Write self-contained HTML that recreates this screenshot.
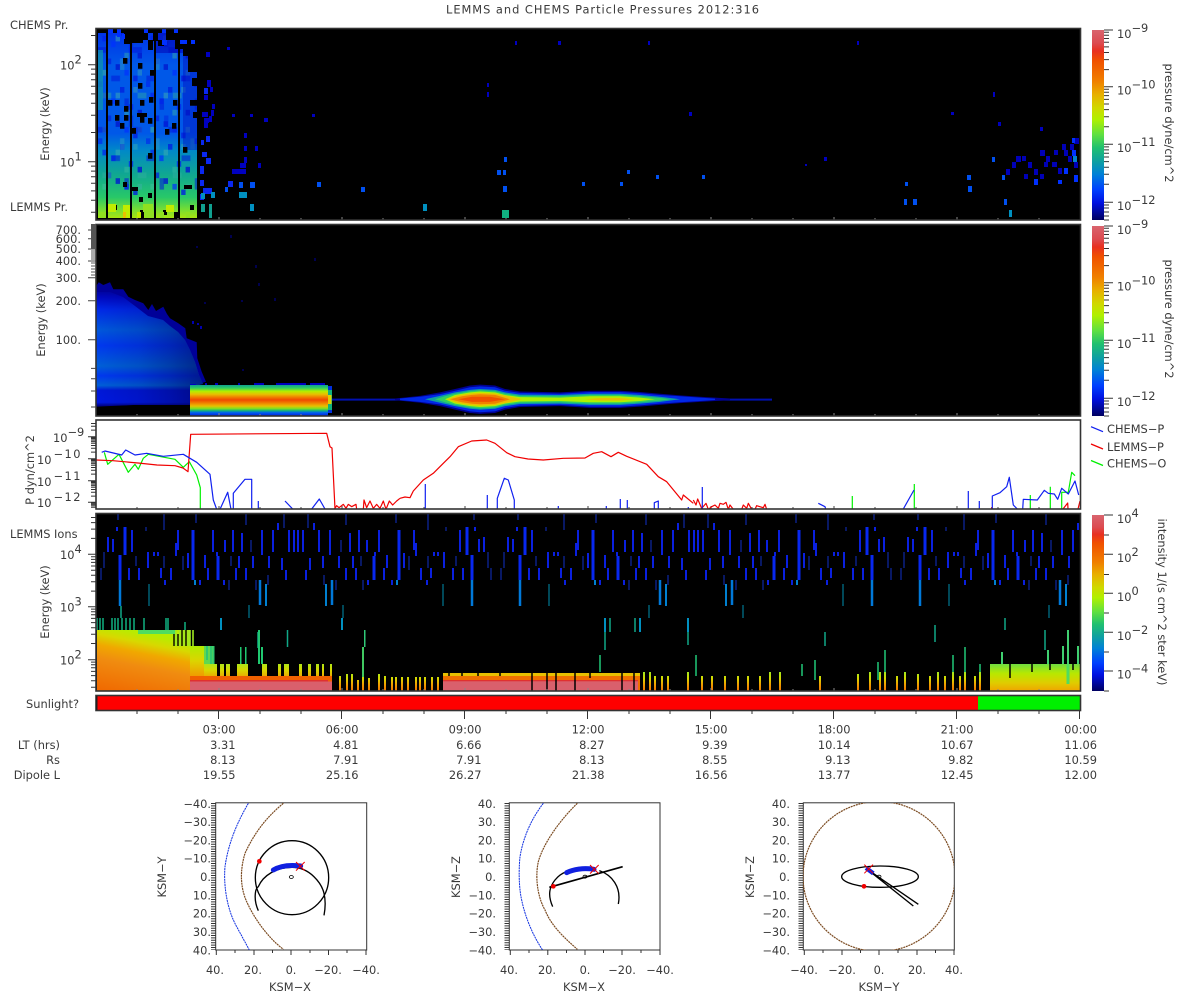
<!DOCTYPE html>
<html lang="en"><head><meta charset="utf-8"><title>LEMMS and CHEMS Particle Pressures 2012:316</title>
<style>
html,body{margin:0;padding:0;background:#fff}
svg{display:block}
text{font-family:"DejaVu Sans","Liberation Sans",sans-serif;font-size:11.4px;fill:#3a3a3a}
.e{text-anchor:end}.m{text-anchor:middle}
</style></head><body>
<svg width="1200" height="1000" viewBox="0 0 1200 1000" xmlns="http://www.w3.org/2000/svg">
<defs>
<linearGradient id="cb" x1="0" y1="0" x2="0" y2="1">
<stop offset="0" stop-color="#d9646e"/><stop offset=".07" stop-color="#dc4a50"/><stop offset=".11" stop-color="#e83020"/><stop offset=".16" stop-color="#f05000"/><stop offset=".27" stop-color="#f08000"/><stop offset=".34" stop-color="#e8b000"/><stop offset=".41" stop-color="#d0d800"/><stop offset=".47" stop-color="#b0f000"/><stop offset=".55" stop-color="#60e040"/><stop offset=".62" stop-color="#20c070"/><stop offset=".69" stop-color="#0fa0a0"/><stop offset=".76" stop-color="#0080d8"/><stop offset=".84" stop-color="#0040ff"/><stop offset=".91" stop-color="#0010e0"/><stop offset="1" stop-color="#000060"/>
</linearGradient>
<linearGradient id="p1g" gradientUnits="userSpaceOnUse" x1="0" y1="30" x2="0" y2="218">
<stop offset="0" stop-color="#0030e8"/><stop offset=".19" stop-color="#0058e8"/><stop offset=".55" stop-color="#0058e8"/><stop offset=".64" stop-color="#0088c8"/><stop offset=".77" stop-color="#10a890"/><stop offset=".89" stop-color="#28c868"/><stop offset=".95" stop-color="#70dc38"/><stop offset="1" stop-color="#a8e410"/>
</linearGradient>
<pattern id="p1n" patternUnits="userSpaceOnUse" x="98" y="30" width="48" height="57">
<rect x="4.4" y="5.7" width="4.4" height="5.7" fill="#0020f0" opacity=".7"/><rect x="13.2" y="11.4" width="4.4" height="5.7" fill="#0030ff" opacity=".7"/><rect x="22" y="0" width="4.4" height="5.7" fill="#0020e0" opacity=".8"/><rect x="30.8" y="17.1" width="4.4" height="5.7" fill="#0020f0" opacity=".7"/><rect x="39.6" y="22.8" width="4.4" height="5.7" fill="#0018d0" opacity=".8"/><rect x="8.8" y="28.5" width="4.4" height="5.7" fill="#0020e0" opacity=".7"/><rect x="17.6" y="34.2" width="4.4" height="5.7" fill="#0018d0" opacity=".8"/><rect x="26.4" y="39.9" width="4.4" height="5.7" fill="#0030ff" opacity=".7"/><rect x="35.2" y="45.6" width="4.4" height="5.7" fill="#0020e0" opacity=".8"/><rect x="0" y="51.3" width="4.4" height="5.7" fill="#0020f0" opacity=".6"/><rect x="17.6" y="5.7" width="4.4" height="5.7" fill="#40b0b0" opacity=".5"/><rect x="35.2" y="0" width="4.4" height="5.7" fill="#40b0b0" opacity=".4"/><rect x="4.4" y="39.9" width="4.4" height="5.7" fill="#40c0a0" opacity=".5"/><rect x="26.4" y="22.8" width="4.4" height="5.7" fill="#40c0a0" opacity=".4"/><rect x="39.6" y="39.9" width="4.4" height="5.7" fill="#40b0b0" opacity=".4"/>
</pattern>
<pattern id="p1m" patternUnits="userSpaceOnUse" x="98" y="30" width="35.2" height="79.8">
<rect x="0" y="17.1" width="8.8" height="5.7" fill="#0018d8" opacity=".55"/><rect x="13.2" y="45.6" width="8.8" height="5.7" fill="#0018d8" opacity=".55"/><rect x="26.4" y="68.4" width="4.4" height="11.4" fill="#0018d8" opacity=".55"/><rect x="22" y="28.5" width="4.4" height="11.4" fill="#30a0c0" opacity=".45"/><rect x="4.4" y="62.7" width="8.8" height="5.7" fill="#30b0a0" opacity=".45"/><rect x="30.8" y="5.7" width="4.4" height="11.4" fill="#0020e0" opacity=".5"/>
</pattern>
<linearGradient id="p2g" gradientUnits="userSpaceOnUse" x1="0" y1="285" x2="0" y2="406">
<stop offset="0" stop-color="#000080"/><stop offset=".1" stop-color="#0008c0"/><stop offset=".2" stop-color="#0028e8"/><stop offset=".37" stop-color="#0058dc"/><stop offset=".5" stop-color="#0038f0"/><stop offset=".67" stop-color="#0060d8"/><stop offset=".75" stop-color="#0038f0"/><stop offset=".83" stop-color="#0060d8"/><stop offset=".87" stop-color="#0018d8"/><stop offset=".97" stop-color="#0018e0"/><stop offset="1" stop-color="#000080"/>
</linearGradient>
<linearGradient id="p2f" x1="0" y1="0" x2="1" y2="0">
<stop offset="0" stop-color="#000050" stop-opacity="0"/><stop offset=".4" stop-color="#000050" stop-opacity=".15"/><stop offset=".7" stop-color="#000050" stop-opacity=".35"/><stop offset="1" stop-color="#000050" stop-opacity=".6"/>
</linearGradient>
<linearGradient id="band" gradientUnits="userSpaceOnUse" x1="0" y1="385" x2="0" y2="416">
<stop offset="0" stop-color="#10a090"/><stop offset=".1" stop-color="#30d060"/><stop offset=".2" stop-color="#b0f000"/><stop offset=".3" stop-color="#e8c000"/><stop offset=".39" stop-color="#f08000"/><stop offset=".48" stop-color="#f04800"/><stop offset=".58" stop-color="#f08000"/><stop offset=".68" stop-color="#e8c000"/><stop offset=".76" stop-color="#80e020"/><stop offset=".83" stop-color="#10b080"/><stop offset=".89" stop-color="#0060f0"/><stop offset="1" stop-color="#0020e0"/>
</linearGradient>
<linearGradient id="hotA" x1=".3" y1="0" x2="0" y2="1">
<stop offset="0" stop-color="#b8ec00"/><stop offset=".14" stop-color="#d8d800"/><stop offset=".3" stop-color="#f0a800"/><stop offset=".5" stop-color="#f08c10"/><stop offset="1" stop-color="#f06800"/>
</linearGradient>
<linearGradient id="hotS" gradientUnits="userSpaceOnUse" x1="0" y1="662" x2="0" y2="678">
<stop offset="0" stop-color="#a0e820"/><stop offset=".5" stop-color="#d8d800"/><stop offset="1" stop-color="#f0a000"/>
</linearGradient>
<linearGradient id="hotD" gradientUnits="userSpaceOnUse" x1="0" y1="672" x2="0" y2="691">
<stop offset="0" stop-color="#a0e820"/><stop offset=".35" stop-color="#d8d800"/><stop offset=".65" stop-color="#f0a000"/><stop offset="1" stop-color="#f07000"/>
</linearGradient>
<linearGradient id="hotB" gradientUnits="userSpaceOnUse" x1="0" y1="664" x2="0" y2="691">
<stop offset="0" stop-color="#70dc40"/><stop offset=".35" stop-color="#b8e800"/><stop offset=".7" stop-color="#e0cc00"/><stop offset="1" stop-color="#f0a400"/>
</linearGradient>
<linearGradient id="hotC" gradientUnits="userSpaceOnUse" x1="0" y1="646" x2="0" y2="676">
<stop offset="0" stop-color="#b0ec00"/><stop offset=".5" stop-color="#dcd400"/><stop offset="1" stop-color="#f09c00"/>
</linearGradient>
<clipPath id="c1"><rect x="96" y="28" width="985" height="192"/></clipPath>
<clipPath id="c2"><rect x="96" y="224" width="985" height="192"/></clipPath>
<clipPath id="c3"><rect x="96" y="420" width="985" height="89"/></clipPath>
<clipPath id="c4"><rect x="96" y="513" width="985" height="178"/></clipPath>
<clipPath id="c5"><rect x="803" y="803" width="151" height="147"/></clipPath>
<g id="mt"><path d="M1104 2.6h5M1104 5.6h5M1104 8.9h5M1104 12.7h5M1104 17.3h5M1104 22.9h5M1104 30h5M1104 40h5" stroke="#333" fill="none"/></g>
<g id="st">
<path fill="none" stroke="#0a20e0" stroke-width="2" d="M12 537V552M17 539V552M21 527V531M36 530V552M43 568V580M52 552V568M58 552V556M62 552V556M80 543V556M82 530V550M92 553V568M109 555V568M117 530V552M121 552V556M129 540V552M137 530V552M140 568V580M143 556V568M146 533V552M166 530V555M177 530V552M182 523V530M193 530V552M198 530V552M157 556V568M186 558V570M75 568V580M104 580V585M128 580V585M69 580V585M33 568V580M65 568V578M112 568V580M150 568V580M173 556V568M190 570V580"/>
<path fill="none" stroke="#0828f0" stroke-width="3" d="M29 527V555M97 530V580M24 555V580M122 556V580"/>
<path fill="none" stroke="#1030c8" d="M8 552V568M68 513V530M5 568V580M22 513V520M68 556V568M150 513V525M188 513V528M155 540V552M100 513V523M50 527V531M133 580V590M172 575V585M40 556V566M87 556V570M135 556V566M160 580V590"/>
<path fill="none" stroke="#0078d8" stroke-width="2.5" d="M24 580V606M164 580V605"/>
<path fill="none" stroke="#0080d0" stroke-width="2" d="M170 584V606M99 580V585"/>
<path fill="none" stroke="#0090b0" d="M53 584V606M153 605V618"/>
</g>
</defs>
<rect width="1200" height="1000" fill="#fff"/>
<text x="446" y="13.5" textLength="313">LEMMS and CHEMS Particle Pressures  2012:316</text>

<!-- PANEL 1 -->
<rect x="96" y="28" width="985" height="192" fill="#000"/>
<g clip-path="url(#c1)">
<rect x="98" y="30" width="99" height="188" fill="url(#p1g)"/>
<rect x="98" y="30" width="99" height="165" fill="url(#p1n)"/>
<rect x="98" y="30" width="99" height="160" fill="url(#p1m)"/>
<rect x="98" y="50" width="5" height="60" fill="#0f98a8" opacity=".7"/>
<rect x="183" y="45" width="14" height="105" fill="#0010c0" opacity=".45"/>
<rect x="155" y="33" width="42" height="20" fill="#0000b0" opacity=".5"/>
<path fill="#000" d="M98 28h99v5h-99zM124 33h8v11h-8zM131 33h12v10h-12zM143 33h5v7h-5zM153 33h5v8h-5zM166 33h31v7h-31zM175 40h22v9h-22zM183 49h14v7h-14zM188 56h9v16h-9zM148 40h5v10h-5zM158 40h6v6h-6z"/>
<path fill="#000" d="M123 58h4.4v5.7h-4.4zM138 63h4.4v5.7h-4.4zM150 70h4.4v5.7h-4.4zM108 100h4.4v5.7h-4.4zM115 100h4.4v5.7h-4.4zM124 106h4.4v5.7h-4.4zM140 100h4.4v5.7h-4.4zM149 97h4.4v5.7h-4.4zM173 100h4.4v5.7h-4.4zM190 100h7v5.7h-7zM138 83h4.4v5.7h-4.4zM115 115h4.4v5.7h-4.4zM124 115h4.4v5.7h-4.4zM137 113h10v4h-10zM140 117h4.4v5.7h-4.4zM148 118h4.4v5.7h-4.4zM130 128h6v5.7h-6zM120 123h4.4v5.7h-4.4zM172 123h4.4v5.7h-4.4zM165 129h4.4v5.7h-4.4zM148 153h4.4v5.7h-4.4zM183 147h4.4v5.7h-4.4zM192 78h5v8h-5zM193 112h4v6h-4z"/>
<path fill="#0030ff" d="M108 29h5v4h-5zM117 29h4v8h-4zM144 29h4v4h-4zM162 29h4v4h-4zM122 34h3v5h-3zM162 40h5v5h-5zM174 29h4v4h-4zM180 40h7v4h-7zM191 40h4v4h-4z"/>
<path fill="#000" d="M106 30h2v188h-2zM130 30h2v188h-2zM154 30h2v188h-2zM178 30h2v188h-2z"/>
<path fill="#000" d="M113 205h4v5h-4zM123 182h4v5h-4zM140 210h4v8h-4zM139 197h4v5h-4zM163 210h4v5h-4zM174 212h4v6h-4zM190 205h4v5h-4zM148 193h4v5h-4zM130 187h8v4h-8zM184 185h8v4h-8z"/>
<path fill="#c0ec00" d="M108 204h8v8h-8zM123 205h7v13h-7zM166 205h8v7h-8zM137 212h4v6h-4z"/>
<path fill="#90e020" d="M100 212h6v6h-6zM143 204h10v8h-10zM160 212h4v6h-4zM145 212h9v6h-9zM186 212h4v6h-4z"/>
<rect x="123" y="212" width="3" height="6" fill="#e8c000"/>
<path fill="#0a28f0" d="M200 166h4v8h-4zM200 180h4v6h-4zM201 140h3v5h-3zM202 152h5v5h-5zM200 194h4v6h-4zM204 88h4v6h-4zM206 136h4v6h-4zM206 158h5v6h-5zM228 181h5v6h-5zM203 188h9v6h-9z"/>
<path fill="#0000c0" d="M207 80h4v7h-4zM210 87h3v5h-3zM204 95h4v5h-4zM212 104h3v5h-3zM211 110h3v6h-3zM202 112h6v5h-6zM204 118h5v5h-5zM209 116h3v6h-3zM204 123h4v5h-4zM227 47h3v3h-3zM206 52h4v5h-4zM244 133h3v5h-3zM244 146h3v5h-3zM244 157h3v6h-3zM240 163h6v5h-6zM232 169h14v5h-14zM258 163h3v5h-3zM232 114h3v3h-3zM250 114h3v3h-3zM264 118h4v4h-4zM312 114h3v3h-3zM255 146h3v5h-3zM515 41h2v4h-2zM558 41h3v4h-3zM648 41h2v4h-2zM857 41h2v4h-2zM487 83h2v4h-2zM487 92h2v5h-2zM993 92h2v5h-2zM689 112h3v4h-3zM998 122h3v4h-3zM951 112h3v3h-3zM1040 127h3v4h-3zM824 157h3v4h-3zM805 164h2v2h-2z"/>
<path fill="#0050f0" d="M250 182h5v6h-5zM239 182h4v6h-4zM225 187h3v5h-3zM317 182h4v5h-4zM361 187h4v5h-4zM503 186h4v6h-4zM504 157h3v5h-3zM497 170h4v5h-4zM503 170h3v5h-3zM582 182h3v4h-3zM627 170h3v4h-3zM620 182h3v4h-3zM656 175h3v4h-3zM702 175h3v4h-3zM905 182h3v4h-3zM904 199h3v6h-3zM913 199h4v6h-4zM1004 199h3v6h-3zM968 186h4v6h-4zM967 175h4v5h-4zM1002 175h3v5h-3zM992 157h3v5h-3z"/>
<path fill="#0090c0" d="M239 192h8v6h-8zM201 193h4v6h-4zM211 192h4v6h-4zM250 204h4v7h-4zM423 204h4v7h-4zM1009 210h3v7h-3z"/>
<path fill="#10a090" d="M209 204h3v14h-3zM201 204h4v8h-4z"/>
<rect x="502" y="210" width="7" height="8" fill="#10b080"/>
<path fill="#0000b8" d="M1016 156h5v6h-5zM1022 156h4v5h-4zM1028 162h4v6h-4zM1034 169h4v6h-4zM1040 150h5v6h-5zM1046 156h4v6h-4zM1052 162h5v5h-5zM1058 168h4v6h-4zM1064 150h4v6h-4zM1070 144h4v6h-4zM1074 138h5v6h-5zM1062 144h4v6h-4zM1068 156h4v6h-4zM1074 162h4v6h-4zM1006 169h4v6h-4zM1012 162h4v6h-4zM1024 174h4v5h-4zM1040 174h4v5h-4zM1054 150h4v5h-4zM1044 162h4v5h-4z"/>
<path fill="#0030ff" d="M1072 150h4v6h-4zM1074 175h4v7h-4zM1064 168h4v6h-4zM1034 179h4v6h-4zM1058 180h4v4h-4zM1072 138h3v5h-3z"/>
<rect x="1073" y="156" width="4" height="6" fill="#0080d0"/>
<path stroke="#888" d="M137 220v-2M178 220v-2M219 220v-3M260 220v-2M301 220v-2M342 220v-3M383 220v-2M424 220v-2M465 220v-3M506 220v-2M547 220v-2M588 220v-3M629 220v-2M670 220v-2M711 220v-3M752 220v-2M793 220v-2M834 220v-3M875 220v-2M916 220v-2M957 220v-3M998 220v-2M1039 220v-2"/>
</g>
<rect x="96" y="28.5" width="984.5" height="191.5" fill="none" stroke="#333" stroke-width="1.6"/>
<path stroke="#333" fill="none" d="M88 161.7h8M88 64.7h8M91 212.3h5M91 200.3h5M91 190.9h5M91 183.2h5M91 176.7h5M91 171.1h5M91 166.1h5M91 132.5h5M91 115.3h5M91 103.3h5M91 93.9h5M91 86.2h5M91 79.7h5M91 74.1h5M91 69.1h5M91 35.5h5"/>
<text x="10" y="29">CHEMS Pr.</text><text x="10" y="211">LEMMS Pr.</text>
<text x="60" y="69.5">10<tspan dy="-6">2</tspan></text><text x="60" y="166.5">10<tspan dy="-6">1</tspan></text>
<text class="m" transform="translate(49 124) rotate(-90)">Energy (keV)</text>
<!-- colorbar 1 -->
<rect x="1092" y="30" width="12" height="190" fill="url(#cb)"/>
<path d="M1104 30h9M1104 86.7h9M1104 144.3h9M1104 202.3h9" stroke="#333"/>
<use href="#mt" y="29.6"/><use href="#mt" y="86.7"/><use href="#mt" y="144.3"/><path d="M1104 205h5M1104 208h5M1104 212h5M1104 216h5M1104 220h5" stroke="#333"/>
<text x="1117" y="38">10<tspan dy="-6">−9</tspan></text><text x="1117" y="94.5">10<tspan dy="-6">−10</tspan></text><text x="1117" y="152">10<tspan dy="-6">−11</tspan></text><text x="1117" y="210">10<tspan dy="-6">−12</tspan></text>
<text class="m" transform="translate(1165 123) rotate(90)">pressure dyne/cm^2</text>

<!-- PANEL 2 -->
<rect x="96" y="224" width="985" height="192" fill="#000"/>
<g clip-path="url(#c2)">
<polygon fill="#000098" points="95.7,286.7 98.7,282.3 103.3,285 110,282.3 113.3,289.3 123.3,289.3 128.3,296.7 135,300 143.3,303.3 148.3,310 152,304 156,311 163.3,306.7 167,314 170,318.3 178.3,323.3 185.3,328.3 186.7,338.3 196.7,342.3 197.3,358.3 201.7,371.7 206,381.7 190,386.7 190,405 133.3,405 95.7,406.7"/>
<polygon fill="url(#p2g)" points="96,292 110,292 123,297 135,306 148,316 163,320 170,326 178,332 185,340 190,350 195,362 199,375 203,384 190,387 190,405 133,405 96,406"/>
<polygon fill="url(#p2f)" points="96,292 110,292 123,297 135,306 148,316 163,320 170,326 178,332 185,340 190,350 195,362 199,375 203,384 190,387 190,405 133,405 96,406"/>
<path fill="#0000b0" d="M192 321h2v3h-2zM197 323h2v2h-2zM200 326h2v3h-2z"/>
<path stroke="#0000a0" fill="none" d="M231 235v3M197 246v2M256 265v3M259 283v3M242 300v2M275 298v3M315 258v3M205 302v2M243 369v2"/>
<rect x="190" y="385" width="138" height="31" fill="url(#band)"/>
<path fill="#0000c0" d="M205 383h2v2h-2zM215 383h3v2h-3zM238 383h2v2h-2zM254 383h10v2h-10zM276 383h30v2h-30zM310 383h15v2h-15zM190 384h6v1h-6z"/>
<path fill="#0030e0" d="M328 386h4v27h-4z"/>
<path fill="#10b080" d="M328 390h4v20h-4z"/><path fill="#e0d000" d="M328 395h3.5v9h-3.5z"/>
<rect x="332" y="398.6" width="440" height="2" fill="#0010b0"/>
<g transform="translate(0 399.3) scale(1 .86)">
<polygon fill="#000090" points="395,-1 420,-4 440,-8 455,-12 470,-16 480,-17 495,-16 505,-12 520,-9 560,-8 590,-10 620,-10 640,-8.5 660,-6.5 680,-4.5 700,-3 730,-1 730,1 700,3 680,4.5 660,6.5 640,8.5 620,10 590,10 560,8 520,9 505,12 495,16 480,17 470,16 455,12 440,8 420,4 395,1"/>
<polygon fill="#0028e8" points="400,-1 420,-3 440,-6 455,-10 470,-14 480,-15 495,-14 505,-10 520,-7.5 560,-6.5 590,-8.5 620,-8.5 640,-7 660,-5 680,-3.5 700,-2 715,-.8 715,.8 700,2 680,3.5 660,5 640,7 620,8.5 590,8.5 560,6.5 520,7.5 505,10 495,14 480,15 470,14 455,10 440,6 420,3 400,1"/>
<polygon fill="#10a0a0" points="425,0 440,-4 455,-8 470,-11 480,-12 495,-11 505,-8 520,-5.5 560,-5 590,-6.5 620,-6.5 640,-5 660,-3 680,0 660,3 640,5 620,6.5 590,6.5 560,5 520,5.5 505,8 495,11 480,12 470,11 455,8 440,4"/>
<polygon fill="#30d060" points="435,0 445,-3.5 455,-6.5 470,-9.5 480,-10.5 495,-9.5 505,-6.5 520,-4 560,-3.5 590,-5 620,-5 640,-3.5 660,-1.5 670,0 660,1.5 640,3.5 620,5 590,5 560,3.5 520,4 505,6.5 495,9.5 480,10.5 470,9.5 455,6.5 445,3.5"/>
<polygon fill="#b0f000" points="445,0 455,-5 470,-8 480,-9 495,-8 505,-5 520,-2.5 560,-2 590,-3.5 620,-3.5 640,-2 655,0 640,2 620,3.5 590,3.5 560,2 520,2.5 505,5 495,8 480,9 470,8 455,5"/>
<polygon fill="#e8c000" points="447,0 458,-4.5 470,-6.8 480,-7.5 495,-6.8 507,-4 522,0 507,4 495,6.8 480,7.5 470,6.8 458,4.5"/>
<polygon fill="#e8c000" points="585,0 600,-1.5 620,-1.5 635,0 620,1.5 600,1.5"/>
<polygon fill="#f08000" points="450,0 462,-3.5 472,-5.2 480,-5.8 495,-5.2 510,0 495,5.2 480,5.8 472,5.2 462,3.5"/>
<polygon fill="#f05000" points="458,0 472,-3 490,-3 505,0 490,3 472,3"/>
</g>
<path stroke="#888" d="M137 416v-2M178 416v-2M219 416v-3M260 416v-2M301 416v-2M342 416v-3M383 416v-2M424 416v-2M465 416v-3M506 416v-2M547 416v-2M588 416v-3M629 416v-2M670 416v-2M711 416v-3M752 416v-2M793 416v-2M834 416v-3M875 416v-2M916 416v-2M957 416v-3M998 416v-2M1039 416v-2"/>
</g>
<rect x="96" y="224.5" width="984.5" height="191.5" fill="none" stroke="#333" stroke-width="1.6"/>
<path stroke="#444" fill="none" d="M88 339.7h8M88 300.7h8M88 277.7h8M88 261h8M88 249h8M88 238.7h8M88 230h8M91 368.4h5M91 378.7h5M91 391h5M91 407h5"/>
<rect x="91" y="224" width="5" height="25" fill="#555"/>
<path stroke="#555" d="M91 251h5M91 253h5M91 255h5M91 257h5M91 259h5M91 263h5M91 266h5M91 269h5M91 272h5M91 275h5"/>
<text class="e" x="81" y="234">700.</text><text class="e" x="81" y="243">600.</text><text class="e" x="81" y="253">500.</text><text class="e" x="81" y="265">400.</text><text class="e" x="81" y="282">300.</text><text class="e" x="81" y="305">200.</text><text class="e" x="81" y="344">100.</text>
<text class="m" transform="translate(45 320) rotate(-90)">Energy (keV)</text>
<!-- colorbar 2 -->
<rect x="1092" y="226" width="12" height="190" fill="url(#cb)"/>
<path d="M1104 226h9M1104 282.7h9M1104 340.3h9M1104 398.3h9" stroke="#333"/>
<use href="#mt" y="225.6"/><use href="#mt" y="282.7"/><use href="#mt" y="340.3"/><path d="M1104 401h5M1104 404h5M1104 408h5M1104 412h5M1104 416h5" stroke="#333"/>
<text x="1117" y="234">10<tspan dy="-6">−9</tspan></text><text x="1117" y="290.5">10<tspan dy="-6">−10</tspan></text><text x="1117" y="348">10<tspan dy="-6">−11</tspan></text><text x="1117" y="406">10<tspan dy="-6">−12</tspan></text>
<text class="m" transform="translate(1165 319) rotate(90)">pressure dyne/cm^2</text>

<!-- PANEL 3 -->
<g clip-path="url(#c3)">
<path stroke="#444" d="M137 509v-2M178 509v-2M219 509v-3M260 509v-2M301 509v-2M342 509v-3M383 509v-2M424 509v-2M465 509v-3M506 509v-2M547 509v-2M588 509v-3M629 509v-2M670 509v-2M711 509v-3M752 509v-2M793 509v-2M834 509v-3M875 509v-2M916 509v-2M957 509v-3M998 509v-2M1039 509v-2"/>
<g fill="none" stroke-width="1.2" stroke-linejoin="round">
<path stroke="#00f000" d="M104.3 452.3L107.7 464.3 119 454.3 128.3 472.3 135 464.3 138.3 469.3 143.3 458.3 148.3 454.3 175 459.3 183.3 467.3 189.3 461.7 196.7 475 200.3 487.7 200.3 509"/>
<path stroke="#00f000" d="M852.3 509V496M914.3 509V484M1030.3 509V495M1050.3 509V486.7M1061.7 509V492.3L1068.3 492.3 1071.7 472.3 1075 475.7"/>
<path stroke="#f00000" d="M96 460L113 460.7 138 463 157 465 175 465.7 183 468 188 471.7 190.7 434.3 326.7 433.3 330 446.7 332 448 335 509"/>
<g transform="translate(0 415) scale(.33333)" stroke-width="3.6">
<path stroke="#f00000" d="M1003 283L1010 272 1017 278 1030 268 1038 280 1045 268 1055 275 1068 268 1070 283 1090 283 1092 255 1100 278 1110 258 1120 280 1130 268 1140 280 1150 258 1158 283 1168 258 1178 270 1190 258 1200 250"/>
</g>
<path stroke="#f00000" d="M400 498.3L405 497 410 497.7 413.3 491 423.3 480 433.3 473.3 443.3 463.3 450 456.7 458.3 446.7 471.7 441 486.7 440 495 443.3 506.7 452.7 515 456.7 528 459 543.3 460 563.3 458.3 585 458 593.3 453.3 601.7 451.7 611 456.7 618.3 452.3 626.7 456.3 646.7 464.3 658.3 476.7 666.7 481.7 681.7 500 683.3 495 693.3 503.3"/>
<g transform="translate(400 415) scale(.33333)" stroke-width="3.6">
<path stroke="#f00000" d="M880 255L888 270 893 252 905 280 918 265 925 283 935 275 945 270 955 280 960 265 970 268 978 262 985 283 990 270 1000 283 1025 283 1030 270 1040 280 1045 265 1055 283 1065 283 1070 272 1090 278 1095 268 1100 283"/>
</g>
<path stroke="#f00000" d="M991.7 509V507M1063 509L1067.7 503 1068 509M1078 509L1080 501"/>
<path stroke="#1020f0" d="M101.7 452.3L105 451 121.7 455 125.7 450 135 455 146.7 453.3 163.3 456.3 183.3 454.3 196.7 462.3 210 474.3 213.3 500 216.7 509.3M220 509.3L227.7 492.3 231 509.3M233.3 509.3V493.3L245 479.3 251.7 479.3V509.3M258.3 501V509M285 501L292.7 509M311.7 509L319.3 499 325 509M425.3 484V509M487.3 495V509M497.3 509V498.3L504.3 478.3 508.3 480 514.3 500V509M558.3 506V509M606.3 506V509M620.3 499V509M627.3 500V509M654.3 509V502.7L658.3 501V509M688.3 507V509M702.3 487V509M818.3 503.3L825 506.7 825.7 509M903.3 509L914 490M968.3 491V509M979.3 501V509M992.3 509V496L1000 492.7 1006.7 486.7 1009.3 477.3 1013.3 505 1017.3 509M1022.7 509L1023.3 499.3 1037.3 500 1044.3 490.3 1048.3 493.3 1054.3 494 1057.7 499.3 1061.7 488.3 1068.3 494 1075 481 1078.7 495"/>
</g></g>
<rect x="96" y="420" width="984.5" height="89" fill="none" stroke="#333" stroke-width="1.6"/>
<path stroke="#333" fill="none" d="M88 436.7h8M88 458.7h8M88 480.7h8M88 502.3h8M91 430.1h5M91 426.2h5M91 423.5h5M91 452.1h5M91 448.2h5M91 445.5h5M91 443.3h5M91 441.6h5M91 440.1h5M91 438.8h5M91 437.7h5M91 474.1h5M91 470.2h5M91 467.5h5M91 465.3h5M91 463.6h5M91 462.1h5M91 460.8h5M91 459.7h5M91 496.1h5M91 492.2h5M91 489.5h5M91 487.3h5M91 485.6h5M91 484.1h5M91 482.8h5M91 481.7h5M91 507.2h5M91 505.7h5M91 504.4h5M91 503.3h5"/>
<text x="53" y="442">10<tspan dy="-6">−9</tspan></text>
<text x="37" y="464">10<tspan dx="2" dy="-6" letter-spacing="1.5">−10</tspan></text><text x="37" y="486">10<tspan dx="2" dy="-6" letter-spacing="1.5">−11</tspan></text><text x="37" y="507">10<tspan dx="2" dy="-6" letter-spacing="1.5">−12</tspan></text>
<text class="m" transform="translate(34 470) rotate(-90)">P dyn/cm^2</text>
<path d="M1091 426.7L1103 431.7" stroke="#1020f0" stroke-width="1.3"/><path d="M1091 444L1103 449" stroke="#f00000" stroke-width="1.3"/><path d="M1091 460.5L1103 465.5" stroke="#00f000" stroke-width="1.3"/>
<text x="1107" y="433">CHEMS−P</text><text x="1107" y="451">LEMMS−P</text><text x="1107" y="467.5">CHEMS−O</text>

<!-- PANEL 4 -->
<rect x="96" y="513" width="985" height="178" fill="#000"/>
<g clip-path="url(#c4)">
<use href="#st" x="96"/><use href="#st" transform="translate(496 0) scale(-1 1)"/><use href="#st" x="496"/><use href="#st" transform="translate(896 0) scale(-1 1)"/><use href="#st" x="896"/>
<path fill="none" stroke="#10b080" stroke-width="1.5" d="M97 618V630M100 618V630M103 618V630M112 618V630M115 618V630M118 618V630M122 618V630M126 618V630M130 618V630M134 618V630M144 618V630M166 618V630M168 618V630M185 622V630"/>
<path fill="none" stroke="#0090c0" stroke-width="2" d="M221 618V630M342 618V630M605 618V632M640 618V632M688 618V632"/>
<path fill="none" stroke="#10a888" stroke-width="1.5" d="M121 606V618M258 632V648M287.5 630V647M605 632V650M610 618V632M635 618V632M688 632V645M825 632V646M935 625V642M1045 630V650M1005 618V630"/>
<rect x="97" y="630" width="93" height="61" fill="url(#hotA)"/>
<rect x="138" y="630" width="37" height="4" fill="#50dc60"/>
<path stroke="#000" stroke-width="1.4" fill="none" d="M174 634V646M178 634V646M182 630V646M186 630V646M192 630V646"/>
<path stroke="#a0e820" stroke-width="1.6" fill="none" d="M176 630V646M180 630V646M184 630V646M188 630V646M190 630V646M193 630V646"/>
<rect x="190" y="646" width="14" height="30" fill="url(#hotC)"/>
<rect x="204" y="646" width="9" height="18" fill="#60d850"/>
<path stroke="#30c870" stroke-width="2" fill="none" d="M207 646V660M211 646V664M213.5 646V664"/>
<path fill="url(#hotS)" d="M204 664h13v12h-13zM220 664h4v12h-4zM226 664h4v12h-4zM237 664h11v12h-11zM262 664h5v12h-5zM278 664h3v12h-3zM284 664h5v12h-5zM299 664h3v12h-3zM308 664h3v12h-3zM316 664h3v12h-3zM322 664h2v12h-2zM330 664h2v12h-2z"/>
<path fill="#20c870" d="M258 630h2v34h-2zM261 647h2v17h-2zM240 647h1.5v17h-1.5zM245 647h1.5v17h-1.5z"/>
<rect x="190" y="676" width="142" height="15" fill="#f06000"/>
<rect x="190" y="680" width="138" height="1.5" fill="#e03030"/>
<rect x="190" y="681.5" width="142" height="9.5" fill="#d9606c"/>
<path stroke="url(#hotD)" stroke-width="2" fill="none" d="M347 674V691M352 674V691M358 680V691M379 674V691M392 677V691M396 677V691M408 677V691M416 677V691M425 677V691M432 677V691M438 677V691M363 676V691M340 676V691M369 678V691M385 676V691M402 677V691M420 677V691"/>
<rect x="362" y="647" width="2" height="30" fill="#40c860"/>
<rect x="364" y="630" width="1.5" height="17" fill="#30c878"/>
<rect x="443" y="676" width="197" height="15" fill="#f07000"/>
<rect x="443" y="673" width="197" height="3" fill="#e8c000"/>
<rect x="443" y="681" width="195" height="9.5" fill="#d9606c"/>
<rect x="443" y="680" width="195" height="1.3" fill="#e03030"/>
<path stroke="#000" stroke-width="1.5" fill="none" d="M449 673V676M462 673V676M478 673V676M500 673V676M532 673V691M547 673V691M556 673V691M575 673V691M622 673V691M634 673V691M590 673V678"/>
<path stroke="url(#hotD)" stroke-width="2" fill="none" d="M644 672V691M650 672V691M655 676V691M662 676V691M668 676V691M688 672V691M702 676V691M712 676V691M725 676V691M738 676V691M748 676V691M760 676V691M770 672V691M780 672V691M820 676V691M858 674V691M870 672V691M880 672V691M885 672V691M897 676V691M905 672V691M918 674V691M930 676V691M938 672V691M945 676V691M953 672V691M960 676V691M965 672V691M975 676V691M980 672V691"/>
<path stroke="#20c878" stroke-width="1.5" fill="none" d="M696 655V676M815 660V680M885 650V672M965 647V672M878 662V680M802 664V676M953 655V672M600 655V672M980 664V672"/>
<rect x="990" y="664" width="90" height="27" fill="url(#hotB)"/>
<path stroke="#000" stroke-width="1.5" fill="none" d="M1010 664V678M1032 664V672M1050 664V670M1073 664V670"/>
<path stroke="#40d070" stroke-width="2" fill="none" d="M1068 630V664M1063 646V664M1078 646V664M1048 650V664M1002 652V664"/>
<path fill="none" stroke="#50dc60" stroke-width="3" d="M1068 664V684"/>
<path stroke="#888" d="M137 691v-2M178 691v-2M219 691v-3M260 691v-2M301 691v-2M342 691v-3M383 691v-2M424 691v-2M465 691v-3M506 691v-2M547 691v-2M588 691v-3M629 691v-2M670 691v-2M711 691v-3M752 691v-2M793 691v-2M834 691v-3M875 691v-2M916 691v-2M957 691v-3M998 691v-2M1039 691v-2"/>
</g>
<rect x="96" y="513.5" width="984.5" height="177.5" fill="none" stroke="#333" stroke-width="1.6"/>
<path stroke="#333" fill="none" d="M88 554.3h8M88 606.7h8M88 659.7h8M91 687.2h5M91 680.7h5M91 675.6h5M91 671.4h5M91 667.8h5M91 664.8h5M91 662.1h5M91 643.5h5M91 634.2h5M91 627.7h5M91 622.6h5M91 618.4h5M91 614.8h5M91 611.8h5M91 609.1h5M91 591.1h5M91 581.8h5M91 575.3h5M91 570.2h5M91 566h5M91 562.4h5M91 559.4h5M91 556.7h5M91 538.4h5M91 529.1h5M91 522.6h5M91 517.5h5"/>
<text x="10" y="538">LEMMS Ions</text>
<text x="60" y="559">10<tspan dy="-6">4</tspan></text><text x="60" y="611.5">10<tspan dy="-6">3</tspan></text><text x="60" y="664.5">10<tspan dy="-6">2</tspan></text>
<text class="m" transform="translate(49 602) rotate(-90)">Energy (keV)</text>
<!-- colorbar 3 -->
<rect x="1092" y="515" width="12" height="176" fill="url(#cb)"/>
<path d="M1104 515h9M1104 554.3h9M1104 593.3h9M1104 632.3h9M1104 671h9M1104 535h5M1104 574.5h5M1104 613h5M1104 652h5M1104 691h5" stroke="#333"/>
<text x="1117" y="523">10<tspan dy="-6">4</tspan></text><text x="1117" y="562">10<tspan dy="-6">2</tspan></text><text x="1117" y="601">10<tspan dy="-6">0</tspan></text><text x="1117" y="640">10<tspan dy="-6">−2</tspan></text><text x="1117" y="678.5">10<tspan dy="-6">−4</tspan></text>
<text class="m" transform="translate(1158 602) rotate(90)">intensity 1/(s cm^2 ster keV)</text>

<!-- SUNLIGHT -->
<rect x="96" y="695" width="882" height="15" fill="#f00"/>
<rect x="978" y="695" width="102" height="15" fill="#00f000"/>
<rect x="96" y="695.5" width="984.5" height="15" fill="none" stroke="#333" stroke-width="1.6"/>
<rect x="96" y="696" width="1.5" height="14" fill="#222"/>
<text class="e" x="79" y="708">Sunlight?</text>
<path stroke="#333" fill="none" d="M137 710v4M178 710v4M218.5 710v9M260 710v4M301 710v4M341.5 710v9M383 710v4M424 710v4M464.5 710v9M506 710v4M547 710v4M587.5 710v9M629 710v4M670 710v4M710.5 710v9M752 710v4M793 710v4M833.5 710v9M875 710v4M916 710v4M956.5 710v9M998 710v4M1039 710v4M1079.5 710v9"/>
<g class="m">
<text class="e" x="235.5" y="733.5">03:00</text><text class="e" x="358.5" y="733.5">06:00</text><text class="e" x="481.5" y="733.5">09:00</text><text class="e" x="604.5" y="733.5">12:00</text><text class="e" x="727.5" y="733.5">15:00</text><text class="e" x="850.5" y="733.5">18:00</text><text class="e" x="973.5" y="733.5">21:00</text><text class="e" x="1097" y="733.5">00:00</text>
<text class="e" x="60" y="749">LT (hrs)</text><text class="e" x="235.5" y="749">3.31</text><text class="e" x="358.5" y="749">4.81</text><text class="e" x="481.5" y="749">6.66</text><text class="e" x="604.5" y="749">8.27</text><text class="e" x="727.5" y="749">9.39</text><text class="e" x="850.5" y="749">10.14</text><text class="e" x="973.5" y="749">10.67</text><text class="e" x="1097" y="749">11.06</text>
<text class="e" x="60" y="764">Rs</text><text class="e" x="235.5" y="764">8.13</text><text class="e" x="358.5" y="764">7.91</text><text class="e" x="481.5" y="764">7.91</text><text class="e" x="604.5" y="764">8.13</text><text class="e" x="727.5" y="764">8.55</text><text class="e" x="850.5" y="764">9.13</text><text class="e" x="973.5" y="764">9.82</text><text class="e" x="1097" y="764">10.59</text>
<text class="e" x="60" y="779">Dipole L</text><text class="e" x="235.5" y="779">19.55</text><text class="e" x="358.5" y="779">25.16</text><text class="e" x="481.5" y="779">26.27</text><text class="e" x="604.5" y="779">21.38</text><text class="e" x="727.5" y="779">16.56</text><text class="e" x="850.5" y="779">13.77</text><text class="e" x="973.5" y="779">12.45</text><text class="e" x="1097" y="779">12.00</text>
</g>

<!-- ORBIT 1 -->
<rect x="215.7" y="802.8" width="151" height="147.2" fill="none" stroke="#333"/>
<path d="M213.5 803V950" stroke="#333" stroke-width="5" stroke-dasharray="1 1.4"/>
<path stroke="#333" fill="none" d="M216.3 950v5M254 950v5M291 950v5M328.5 950v5M366 950v5M235 950v3M272.5 950v3M310 950v3M347 950v3"/>
<g transform="translate(140 790) scale(.33333)" fill="none">
<path stroke="#1030e0" stroke-width="3" stroke-dasharray="6 2" d="M325 40C290 100 265 160 255 230C250 290 262 360 290 410L328 480"/>
<path stroke="#7a4a20" stroke-width="3.5" stroke-dasharray="6 2" d="M430 40C375 85 340 135 315 190C300 240 300 290 320 335C340 380 380 440 430 478"/>
<ellipse cx="456" cy="263" rx="110" ry="111" stroke="#000" stroke-width="4"/>
<path stroke="#000" stroke-width="4" d="M355 362C340 330 345 295 355 290C370 255 410 232 456 232C510 232 545 280 552 310C558 335 556 355 552 376"/>
<ellipse cx="454" cy="261" rx="6" ry="4.5" stroke="#000" stroke-width="2.5"/>
<path stroke="#1020e0" stroke-width="15" stroke-linecap="round" d="M400 240C420 228 450 224 482 228"/>
<circle cx="358" cy="214" r="7" fill="#f00000"/>
<path stroke="#f00000" stroke-width="3" d="M468 216L494 242M494 216L468 242"/>
</g>
<g>
<text class="e" x="211" y="808">−40.</text><text class="e" x="211" y="826">−30.</text><text class="e" x="211" y="844.5">−20.</text><text class="e" x="211" y="862.5">−10.</text><text class="e" x="211" y="881">0.</text><text class="e" x="211" y="899.5">10.</text><text class="e" x="211" y="917.5">20.</text><text class="e" x="211" y="936">30.</text><text class="e" x="211" y="954.5">40.</text>
<text class="m" x="215" y="974">40.</text><text class="m" x="253" y="974">20.</text><text class="m" x="291" y="974">0.</text><text class="m" x="328" y="974">−20.</text><text class="m" x="366" y="974">−40.</text>
<text class="m" x="290" y="991">KSM−X</text>
<text class="m" transform="translate(166 877) rotate(-90)">KSM−Y</text>
</g>

<!-- ORBIT 2 -->
<rect x="509.3" y="802.8" width="150.7" height="147.2" fill="none" stroke="#333"/>
<path d="M507 803V950" stroke="#333" stroke-width="5" stroke-dasharray="1 1.4"/>
<path stroke="#333" fill="none" d="M510.3 950v5M547.8 950v5M585 950v5M622 950v5M660 950v5M529 950v3M566.5 950v3M603.5 950v3M641 950v3"/>
<g transform="translate(440 790) scale(.33333)" fill="none">
<path stroke="#1030e0" stroke-width="3" stroke-dasharray="6 2" d="M310 40C275 85 250 140 240 200C235 250 238 300 245 330C255 380 280 440 308 480"/>
<path stroke="#7a4a20" stroke-width="3.5" stroke-dasharray="6 2" d="M412 40C360 90 310 160 295 215C285 260 292 320 315 360C335 410 375 445 412 478"/>
<path stroke="#000" stroke-width="4" d="M338 350C325 320 325 295 345 270C355 258 365 250 380 245M478 242C515 255 545 290 535 342"/>
<path stroke="#000" stroke-width="5" d="M328 292L548 230"/>
<ellipse cx="435" cy="260" rx="6" ry="4.5" stroke="#000" stroke-width="2.5"/>
<path stroke="#1020e0" stroke-width="15" stroke-linecap="round" d="M380 248C400 238 430 233 462 238"/>
<circle cx="340" cy="289" r="7" fill="#f00000"/>
<path stroke="#f00000" stroke-width="3" d="M450 225L476 251M476 225L450 251"/>
</g>
<text class="e" x="496" y="808">40.</text><text class="e" x="496" y="826">30.</text><text class="e" x="496" y="844.5">20.</text><text class="e" x="496" y="862.5">10.</text><text class="e" x="496" y="881">0.</text><text class="e" x="496" y="899.5">−10.</text><text class="e" x="496" y="917.5">−20.</text><text class="e" x="496" y="936">−30.</text><text class="e" x="496" y="954.5">−40.</text>
<text class="m" x="509" y="974">40.</text><text class="m" x="547" y="974">20.</text><text class="m" x="585" y="974">0.</text><text class="m" x="622" y="974">−20.</text><text class="m" x="660" y="974">−40.</text>
<text class="m" x="584" y="991">KSM−X</text>
<text class="m" transform="translate(460 877) rotate(-90)">KSM−Z</text>

<!-- ORBIT 3 -->
<rect x="803.3" y="802.8" width="151" height="147.2" fill="none" stroke="#333"/>
<path d="M801 803V950" stroke="#333" stroke-width="5" stroke-dasharray="1 1.4"/>
<path stroke="#333" fill="none" d="M804.3 950v5M842 950v5M879 950v5M917 950v5M954 950v5M823 950v3M860.5 950v3M898 950v3M935.5 950v3"/>
<g clip-path="url(#c5)"><ellipse cx="879" cy="876.5" rx="76" ry="75" fill="none" stroke="#7a4a20" stroke-width="1.2" stroke-dasharray="2 .7"/></g>
<g transform="translate(740 790) scale(.33333)" fill="none">
<ellipse cx="420" cy="260" rx="115" ry="32" stroke="#000" stroke-width="4"/>
<path stroke="#000" stroke-width="4" d="M382 238L535 343M382 238L520 348"/>
<ellipse cx="417" cy="260" rx="6" ry="4.5" stroke="#000" stroke-width="2.5"/>
<path stroke="#1020e0" stroke-width="13" d="M378 234L400 250"/>
<circle cx="372" cy="289" r="7" fill="#f00000"/>
<path stroke="#f00000" stroke-width="3" d="M373 224L399 250M399 224L373 250"/>
</g>
<text class="e" x="790" y="808">40.</text><text class="e" x="790" y="826">30.</text><text class="e" x="790" y="844.5">20.</text><text class="e" x="790" y="862.5">10.</text><text class="e" x="790" y="881">0.</text><text class="e" x="790" y="899.5">−10.</text><text class="e" x="790" y="917.5">−20.</text><text class="e" x="790" y="936">−30.</text><text class="e" x="790" y="954.5">−40.</text>
<text class="m" x="804" y="974">−40.</text><text class="m" x="842" y="974">−20.</text><text class="m" x="879" y="974">0.</text><text class="m" x="917" y="974">20.</text><text class="m" x="954" y="974">40.</text>
<text class="m" x="879" y="991">KSM−Y</text>
<text class="m" transform="translate(754 877) rotate(-90)">KSM−Z</text>
</svg>
</body></html>
